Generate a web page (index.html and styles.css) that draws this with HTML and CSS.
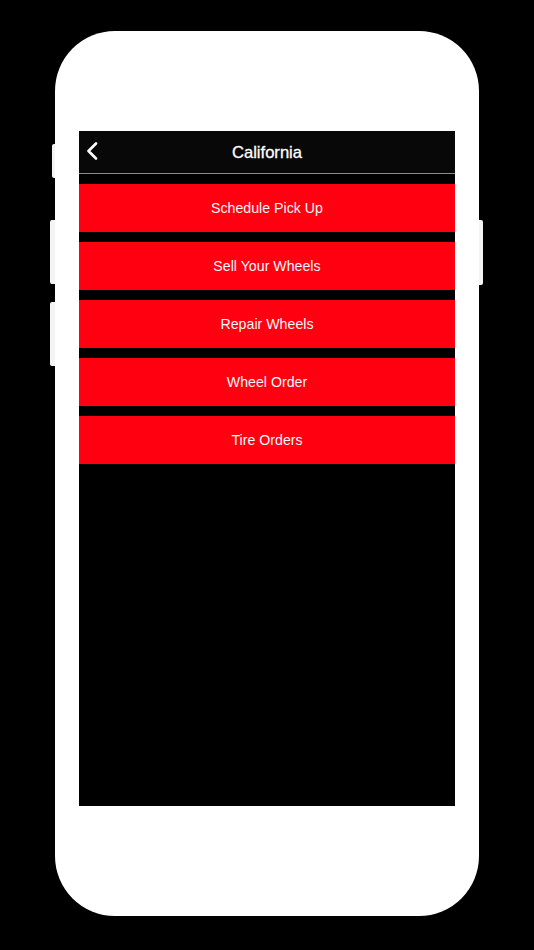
FILE: index.html
```html
<!DOCTYPE html>
<html>
<head>
<meta charset="utf-8">
<link rel="stylesheet" href="styles.css">
</head>
<body>
<div class="phone">
  <span class="side-btn mute"></span>
  <span class="side-btn vol-up"></span>
  <span class="side-btn vol-down"></span>
  <span class="side-btn power"></span>
  <div class="screen">
    <div class="navbar">
      <svg class="back" width="14" height="18" viewBox="0 0 14 18">
        <polyline points="11,1.5 3.5,9 11,16.5" fill="none" stroke="#ffffff" stroke-width="2.6" stroke-linecap="round" stroke-linejoin="round"/>
      </svg>
      <div class="title">California</div>
    </div>
    <div class="menu">
      <div class="item">Schedule Pick Up</div>
      <div class="item">Sell Your Wheels</div>
      <div class="item">Repair Wheels</div>
      <div class="item">Wheel Order</div>
      <div class="item">Tire Orders</div>
    </div>
  </div>
</div>
</body>
</html>
```
FILE: styles.css
```css
html, body {
  margin: 0;
  padding: 0;
  background: #000000;
}
body {
  width: 534px;
  height: 950px;
  overflow: hidden;
  padding-top: 31px;
  box-sizing: border-box;
  font-family: "Liberation Sans", Arial, sans-serif;
}
.phone {
  position: relative;
  margin-left: 55px;
  width: 424px;
  height: 885px;
  background: #ffffff;
  border-radius: 60px / 60px;
  padding: 100px 0 0 24px;
  box-sizing: border-box;
}
.side-btn {
  position: absolute;
  background: #f4f4f4;
  width: 5px;
  border-radius: 2px 0 0 2px;
}
.mute { left: -3px; top: 113px; height: 34px; width: 3px; }
.vol-up { left: -5px; top: 189px; height: 64px; }
.vol-down { left: -5px; top: 271px; height: 64px; }
.power { right: -4px; top: 189px; height: 65px; width: 4px; border-radius: 0 2px 2px 0; }
.screen {
  width: 376px;
  height: 675px;
  background: #000000;
  display: flex;
  flex-direction: column;
}
.navbar {
  position: relative;
  height: 42px;
  background: #080808;
  border-bottom: 1px solid #8a8a8a;
  display: flex;
  align-items: center;
  justify-content: center;
}
.back {
  position: absolute;
  left: 6px;
  top: 11px;
}
.title {
  color: #ffffff;
  font-size: 16.6px;
  -webkit-text-stroke: 0.3px #ffffff;
  padding-top: 1px;
}
.menu {
  display: flex;
  flex-direction: column;
  gap: 10px;
  padding-top: 10px;
}
.item {
  height: 48px;
  background: #ff0010;
  color: #f8f8f8;
  font-size: 14.2px;
  display: flex;
  align-items: center;
  justify-content: center;
}
```
